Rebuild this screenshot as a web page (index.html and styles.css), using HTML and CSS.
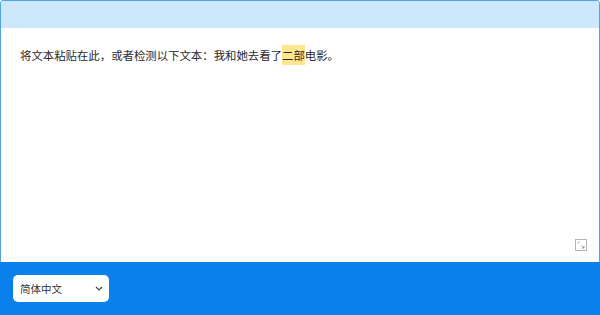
FILE: index.html
```html
<!DOCTYPE html>
<html lang="zh">
<head>
<meta charset="utf-8">
<link rel="stylesheet" href="styles.css">
</head>
<body>
<div class="page">
  <div class="frame">
    <div class="topbar"></div>
    <div class="editor">
      <p class="text">将文本粘贴在此，或者检测以下文本：我和她去看了<span class="mark">二部</span>电影。</p>
      <svg class="resize" width="12" height="12" viewBox="0 0 12 12">
        <rect x="0.5" y="0.5" width="11" height="11" fill="#fff" stroke="#b5b5b5"/>
        <path d="M3 3 L5 3 M3 3 L3 5" stroke="#c4c4c4" stroke-width="1" fill="none"/>
        <path d="M9 9 L7 9 M9 9 L9 7 M9 9 L6.5 6.5" stroke="#9a9a9a" stroke-width="1" fill="none"/>
      </svg>
    </div>
  </div>
  <div class="footer">
    <div class="select">
      <span class="select-label">简体中文</span>
      <svg class="chev" width="8" height="5" viewBox="0 0 8 5">
        <path d="M1 1 L4 4 L7 1" stroke="#444" stroke-width="1.2" fill="none"/>
      </svg>
    </div>
  </div>
</div>
</body>
</html>
```
FILE: styles.css
```css
html, body {
  margin: 0;
  padding: 0;
  background: #ffffff;
}
.page {
  width: 600px;
  height: 315px;
  display: flex;
  flex-direction: column;
  font-family: "Noto Sans CJK SC", "Noto Sans", sans-serif;
}
.frame {
  height: 262px;
  box-sizing: border-box;
  border: 1px solid #4ea5e2;
  border-bottom: none;
  border-radius: 4px 4px 0 0;
  display: flex;
  flex-direction: column;
  overflow: hidden;
}
.topbar {
  height: 27px;
  background: #cde7fb;
  flex: none;
}
.editor {
  flex: 1;
  position: relative;
  background: #ffffff;
  padding: 0 19px;
}
.text {
  margin: 17px 0 0 0;
  font-size: 11.4px;
  line-height: 20px;
  color: #2a2a2a;
  letter-spacing: 0;
}
.mark {
  background: #fde68f;
  padding: 2px 0;
}
.resize {
  position: absolute;
  right: 12px;
  bottom: 11px;
}
.footer {
  flex: 1;
  background: #0a80ea;
  padding: 13px 13px;
}
.select {
  width: 96px;
  height: 27px;
  box-sizing: border-box;
  background: #ffffff;
  border-radius: 5px;
  display: flex;
  align-items: center;
  justify-content: space-between;
  padding: 0 6px 0 7px;
}
.select-label {
  font-size: 10.5px;
  color: #333;
}
.chev {
  display: block;
}
```
